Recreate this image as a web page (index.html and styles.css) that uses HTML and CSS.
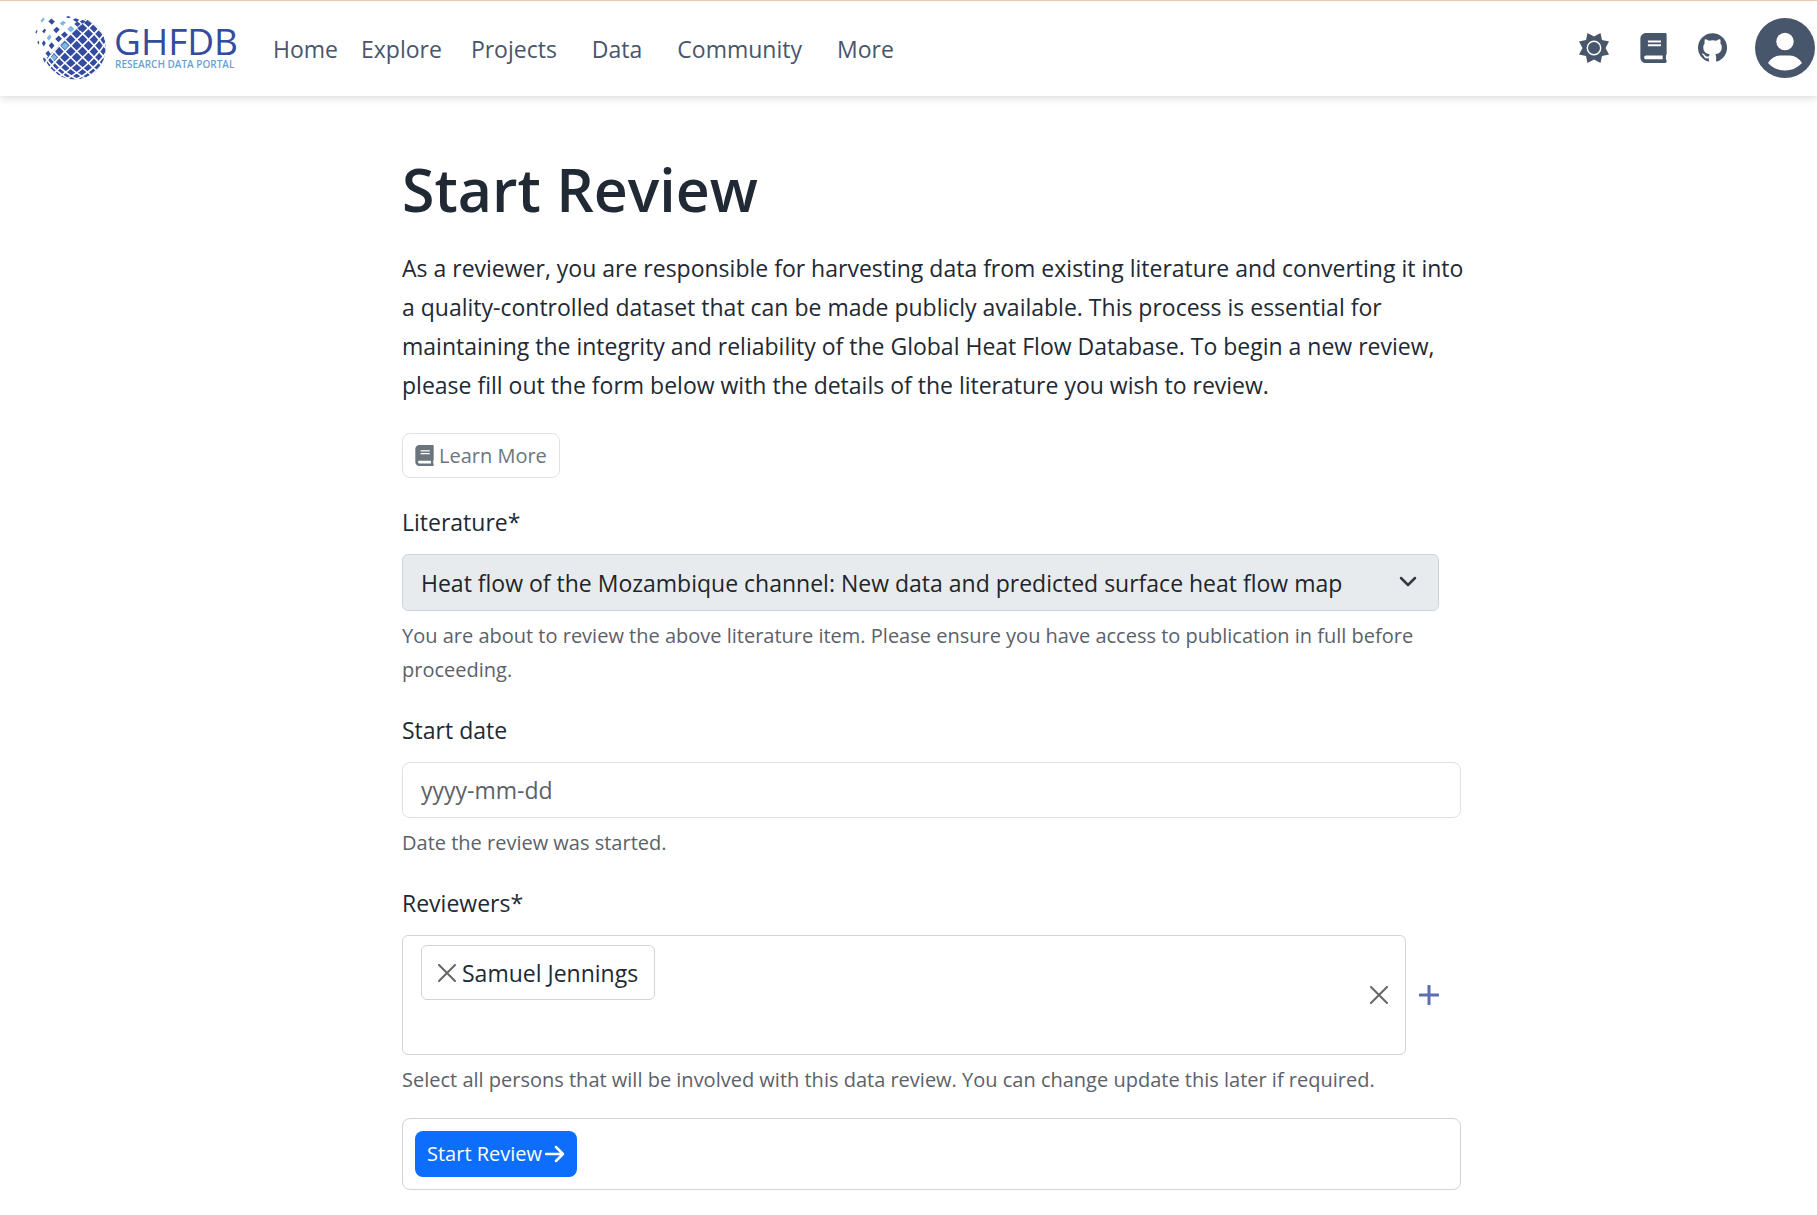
FILE: index.html
```html
<!DOCTYPE html>
<html lang="en">
<head>
<meta charset="utf-8">
<meta name="viewport" content="width=device-width, initial-scale=1">
<title>Start Review - GHFDB</title>
<link rel="stylesheet" href="styles.css">
</head>
<body>
<svg class="sprite" aria-hidden="true">
  <symbol id="book" viewBox="0 0 448 512"><path d="M448 360V24c0-13.300-10.700-24-24-24H96C43 0 0 43 0 96v320c0 53 43 96 96 96h328c13.300 0 24-10.700 24-24v-16c0-7.500-3.500-14.300-8.900-18.700-4.200-15.400-4.200-59.300 0-74.700 5.400-4.300 8.900-11.100 8.900-18.600zM128 134c0-3.300 2.700-6 6-6h212c3.300 0 6 2.700 6 6v20c0 3.300-2.700 6-6 6H134c-3.300 0-6-2.700-6-6v-20zm0 64c0-3.300 2.700-6 6-6h212c3.300 0 6 2.700 6 6v20c0 3.300-2.700 6-6 6H134c-3.300 0-6-2.700-6-6v-20zm253.400 250H96c-17.700 0-32-14.300-32-32 0-17.600 14.400-32 32-32h285.400c-1.900 17.100-1.900 46.900 0 64z"/></symbol>
  <symbol id="cross" viewBox="0 0 18 18"><path d="M1 1l16 16M17 1L1 17" fill="none" stroke="currentColor" stroke-width="2" stroke-linecap="round"/></symbol>
</svg>

<header class="navbar">
  <a class="brand" href="#">
    <svg class="globe" viewBox="36 24 224 206" aria-hidden="true">
      <defs>
        <clipPath id="ball"><circle cx="163" cy="129" r="97"/></clipPath>
        <clipPath id="solid"><path d="M213 24L36 201V230H260V24z"/></clipPath>
      </defs>
      <g clip-path="url(#solid)"><g clip-path="url(#ball)">
        <circle cx="163" cy="129" r="97" fill="#334c9f"/>
        <g fill="none" stroke="#fff" stroke-width="5">
          <g transform="translate(170 121) rotate(45)">
            <ellipse rx="13" ry="190"/><ellipse rx="39" ry="170"/><ellipse rx="64" ry="155"/><ellipse rx="84" ry="145"/><ellipse rx="98" ry="138"/><ellipse rx="108" ry="134"/>
          </g>
          <g transform="translate(170 121) rotate(-45)">
            <ellipse rx="13" ry="190"/><ellipse rx="39" ry="170"/><ellipse rx="64" ry="155"/><ellipse rx="84" ry="145"/><ellipse rx="98" ry="138"/><ellipse rx="108" ry="134"/>
          </g>
        </g>
      </g></g>
      <path fill="#334c9f" d="M83 47l9-9 11 9-9 10zM137 34l6-4 9 3-5 4zM158 42l9-5 11 5-8 7zM180 47l8-5 9 5-9 7zM43 81l4-8 3 2-4 10zM64 77l7-8 5 4-6 11zM98 73l11-10 9 9-11 11zM122 88l11-10 10 10-11 10zM104 101l11-11 10 10-11 11zM49 110l4-4 2 7-3 5zM63 114l6-9 6 8-6 11zM84 121l9-10 9 10-9 11zM74 145l9-9 7 11-7 9zM66 161l4-3 5 9-3 7zM163 55l9-8 10 8-10 8zM172 68l11-9 8 7-11 10z"/>
      <path fill="#7bb8e4" d="M59 44l9-9 4 5-9 10zM118 53l10-8 9 6-10 9zM141 70l11-10 11 10-11 10zM78 98l9-11 6 8-9 11zM122 122l12-11 12 11-12 11zM91 157l9-10 10 10-10 11z"/>
    </svg>
    <span class="wordmark"><span class="wordmark-name">GHFDB</span><span class="wordmark-sub">RESEARCH DATA PORTAL</span></span>
  </a>
  <nav class="menu" aria-label="Main">
    <a class="menu-home" href="#">Home</a>
    <a class="menu-explore" href="#">Explore</a>
    <a href="#">Projects</a>
    <a href="#">Data</a>
    <a href="#">Community</a>
    <a href="#">More</a>
  </nav>
  <div class="tools">
    <button type="button" aria-label="Toggle theme"><svg width="30" height="30" viewBox="-15 -15 30 30"><path fill="currentColor" d="M-6.500-15L0-11.500 6.500-15 8-8 15-6.500 11.500 0 15 6.500 8 8 6.500 15 0 11.500-6.500 15-8 8-15 6.500-11.500 0-15-6.500-8-8z"/><circle r="6.700" fill="currentColor" stroke="#fff" stroke-width="1.400"/></svg></button>
    <a href="#" aria-label="Documentation"><svg width="27" height="30"><use href="#book"/></svg></a>
    <a href="#" aria-label="GitHub"><svg width="29" height="29" viewBox="0 0 16 16"><path fill="currentColor" d="M8 .2a8 8 0 0 0-2.530 15.590c.4.070.55-.17.55-.38 0-.19-.01-.82-.01-1.490-2.010.37-2.530-.49-2.690-.94-.09-.23-.48-.94-.82-1.130-.28-.15-.68-.52-.01-.53.63-.01 1.080.58 1.230.82.72 1.210 1.870.87 2.330.66.07-.52.28-.87.51-1.070-1.780-.2-3.640-.89-3.640-3.950 0-.87.31-1.590.82-2.150-.08-.2-.36-1.020.08-2.120 0 0 .67-.21 2.200.82a7.400 7.400 0 0 1 4 0c1.530-1.040 2.200-.82 2.200-.82.44 1.100.16 1.920.08 2.120.51.56.82 1.270.82 2.150 0 3.070-1.870 3.750-3.650 3.950.29.25.54.73.54 1.480 0 1.070-.01 1.930-.01 2.200 0 .21.150.46.55.38A8 8 0 0 0 8 .2z"/></svg></a>
    <button class="account" type="button" aria-label="Account"><svg width="60" height="60" viewBox="0 0 60 60"><circle cx="30" cy="30" r="30" fill="currentColor"/><circle cx="30" cy="23.500" r="8.700" fill="#fff"/><path fill="#fff" d="M13 45q5-7.500 12-7.500h10q7 0 12 7.500-7 7.500-17 7.500T13 45z"/></svg></button>
  </div>
</header>

<main class="page">
  <h1>Start Review</h1>
  <p class="lead">As a reviewer, you are responsible for harvesting data from existing literature and converting it into a quality-controlled dataset that can be made publicly available. This process is essential for maintaining the integrity and reliability of the Global Heat Flow Database. To begin a new review, please fill out the form below with the details of the literature you wish to review.</p>
  <a class="learn" href="#"><svg width="19" height="21"><use href="#book"/></svg>Learn More</a>

  <form>
    <div class="field">
      <label for="literature">Literature*</label>
      <div class="select-wrap">
        <select id="literature" disabled><option>Heat flow of the Mozambique channel: New data and predicted surface heat flow map</option></select>
        <svg class="chevron" width="18" height="12" viewBox="0 0 18 12" aria-hidden="true"><path d="M2 2l7 7 7-7" fill="none" stroke="#343a40" stroke-width="2.500" stroke-linecap="round" stroke-linejoin="round"/></svg>
      </div>
      <p class="help">You are about to review the above literature item. Please ensure you have access to publication in full before proceeding.</p>
    </div>
    <div class="field">
      <label for="start">Start date</label>
      <input id="start" class="date" type="text" placeholder="yyyy-mm-dd">
      <p class="help">Date the review was started.</p>
    </div>
    <div class="field">
      <label for="reviewers">Reviewers*</label>
      <div class="reviewers">
        <div class="tags">
          <div class="tag-list">
            <span class="tag"><button type="button" aria-label="Remove Samuel Jennings"><svg width="18" height="18"><use href="#cross"/></svg></button>Samuel Jennings</span>
            <input id="reviewers" class="tag-search" type="text">
          </div>
          <button type="button" class="clear" aria-label="Clear all"><svg width="18" height="18"><use href="#cross"/></svg></button>
        </div>
        <button type="button" class="add" aria-label="Add person"><svg width="20" height="20" viewBox="0 0 20 20"><path d="M10 1v18M1 10h18" stroke="currentColor" stroke-width="3" stroke-linecap="round"/></svg></button>
      </div>
      <p class="help">Select all persons that will be involved with this data review. You can change update this later if required.</p>
    </div>
    <div class="actions">
      <button type="submit" class="submit">Start Review<svg width="20" height="18" viewBox="0 0 20 18"><path d="M1 9h17M11 2l7 7-7 7" fill="none" stroke="currentColor" stroke-width="2.500" stroke-linecap="round" stroke-linejoin="round"/></svg></button>
    </div>
  </form>
</main>
</body>
</html>
```
FILE: styles.css
```css
* { box-sizing: border-box; }
body {
  margin: 0;
  background: #fff;
  color: #212934;
  font: 23px/36px "Open Sans", "Noto Sans", sans-serif;
}
h1, p { margin: 0; }
svg { display: block; flex: none; }
a { color: inherit; text-decoration: none; }
button, input, select { font: inherit; color: inherit; }
button { padding: 0; border: 0; background: none; cursor: pointer; }
.sprite { position: absolute; width: 0; height: 0; }
.sprite path, .learn svg { fill: currentColor; }

.navbar {
  display: flex;
  align-items: center;
  height: 96px;
  padding: 0 2px 2px 33px;
  border-top: 1px solid #edc5af;
  background: #fff;
  box-shadow: 0 2px 8px rgba(0, 0, 0, .15);
  color: #47566b;
}
.brand { display: flex; align-items: center; gap: 8px; width: 205px; }
.globe { width: 73px; height: 67px; }
.wordmark { display: flex; flex-direction: column; padding-bottom: 2px; }
.wordmark-name { color: #334c9f; font-size: 37px; line-height: 34px; }
.wordmark-sub { padding-left: 1px; color: #6b9fd4; font-size: 10px; line-height: 12px; font-weight: 600; }
.menu { display: flex; gap: 35px; margin-left: 35px; padding-top: 2px; }
.menu-home { margin-right: -12px; }
.menu-explore { margin-right: -6px; }
.tools { display: flex; align-items: center; gap: 31px; margin-left: auto; }
.account { margin-left: -3px; }

.page {
  display: grid;
  grid-template-columns: minmax(16px, 402fr) minmax(0, 1059px) minmax(16px, 356fr);
  padding: 55px 0 24px;
}
.page > * { grid-column: 2; }
h1 { font-size: 59px; line-height: 76px; font-weight: 600; }
.lead { margin: 22px -8px 0 0; line-height: 39px; }
.learn {
  display: flex;
  align-items: center;
  justify-self: start;
  gap: 5px;
  height: 45px;
  margin-top: 28px;
  padding: 0 12px;
  border: 1px solid #dee2e6;
  border-radius: 8px;
  color: #6c757d;
  font-size: 20px;
}

.field { margin-top: 26px; }
.field + .field { margin-top: 25px; }
.field label { display: block; margin-bottom: 14px; }
.help { margin-top: 8px; color: #5c6169; font-size: 20px; line-height: 34px; }
.select-wrap { position: relative; margin-right: 22px; }
.select-wrap select {
  display: block;
  width: 100%;
  height: 57px;
  padding: 0 60px 0 18px;
  border: 1px solid #ced4da;
  border-radius: 6px;
  background: #e8ebee;
  color: #212529;
  opacity: 1;
  appearance: none;
}
.chevron { position: absolute; right: 22px; top: 22px; }
.date {
  display: block;
  width: 100%;
  height: 56px;
  padding: 0 18px;
  border: 1px solid #dee2e6;
  border-radius: 8px;
}
.date::placeholder { color: #5c6169; opacity: 1; }

.reviewers { display: flex; align-items: center; gap: 13px; padding-right: 22px; }
.tags {
  display: flex;
  flex: 1;
  align-items: center;
  min-height: 120px;
  padding: 9px 17px 9px 18px;
  border: 1px solid #ced4da;
  border-radius: 6px;
}
.tag-list { display: flex; flex: 1; flex-direction: column; align-items: flex-start; }
.tag {
  display: flex;
  align-items: center;
  gap: 6px;
  height: 55px;
  padding: 0 16px;
  border: 1px solid #ced4da;
  border-radius: 6px;
}
.tag-search { width: 100%; height: 45px; border: 0; background: none; outline: none; }
.tag button, .clear { color: #666; }
.add { color: #5b6eb4; }

.actions { margin-top: 21px; padding: 12px; border: 1px solid #ced4da; border-radius: 8px; }
.submit {
  display: flex;
  align-items: center;
  gap: 3px;
  height: 46px;
  padding: 0 12px;
  border-radius: 8px;
  background: #0d6efd;
  color: #fff;
  font-size: 20px;
}
```
